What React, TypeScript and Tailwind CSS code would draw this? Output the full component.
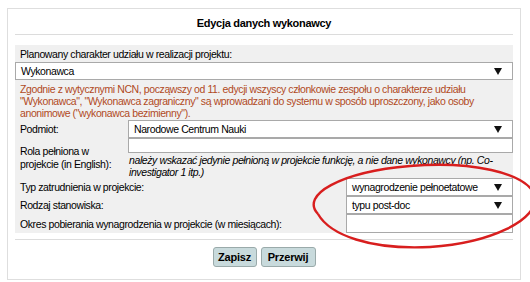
import React from "react";

const Arrow = () => (
  <svg width="8" height="7" viewBox="0 0 8 7" className="shrink-0">
    <path d="M0 0 H8 L4 7 Z" fill="#111" />
  </svg>
);

const Select = ({ value, className = "" }: { value: string; className?: string }) => (
  <div
    className={`flex h-[18px] items-center justify-between border border-[#a9a9a9] bg-white pl-[5px] pr-[10px] ${className}`}
  >
    <span className="whitespace-nowrap">{value}</span>
    <Arrow />
  </div>
);

const App = () => {
  return (
    <div className="relative h-[282px] w-[530px] overflow-hidden bg-white font-['Liberation_Sans',Arial,sans-serif] text-[10.5px] leading-[12px] tracking-[-0.4px] text-black">
      <div className="ml-[7px] mt-[8px] flex h-[272px] w-[514px] flex-col border border-[#dedede] px-[7px]">
        {/* header */}
        <div className="flex h-[26px] items-center justify-center border-b border-[#dcdcdc] pt-[2px] text-[11px] font-bold tracking-[-0.3px]">
          Edycja danych wykonawcy
        </div>

        {/* form panel */}
        <div className="mt-[10px] flex h-[188px] flex-col bg-[#f0f0f0]">
          <div className="flex h-[17px] items-center pl-[5px]">
            Planowany charakter udziału w realizacji projektu:
          </div>
          <Select value="Wykonawca" className="h-[18px] border-[#7f9dc9]" />
          <div className="mt-[3px] pl-[5px] text-[#b04a1e]">
            <div className="whitespace-nowrap">
              Zgodnie z wytycznymi NCN, począwszy od 11. edycji wszyscy członkowie zespołu o charakterze udziału
            </div>
            <div className="whitespace-nowrap">
              "Wykonawca", "Wykonawca zagraniczny" są wprowadzani do systemu w sposób uproszczony, jako osoby
            </div>
            <div className="whitespace-nowrap">anonimowe ("wykonawca bezimienny").</div>
          </div>

          <div className="mt-[1px] flex h-[18px] items-center">
            <div className="w-[113px] shrink-0 pl-[5px]">Podmiot:</div>
            <Select value="Narodowe Centrum Nauki" className="flex-1" />
          </div>

          <div className="flex h-[40px]">
            <div className="flex w-[113px] shrink-0 flex-col justify-end pb-[7px] pl-[5px] leading-[13px]">
              <div className="whitespace-nowrap">Rola pełniona w</div>
              <div className="whitespace-nowrap">projekcie (in English):</div>
            </div>
            <div className="flex min-w-0 flex-1 flex-col">
              <div className="h-[18px] border border-[#a9a9a9] bg-white" />
              <div className="pl-[1px] pt-[1px] italic">
                <div className="whitespace-nowrap">
                  należy wskazać jedynie pełnioną w projekcie funkcję, a nie dane wykonawcy (np. Co-
                </div>
                <div className="whitespace-nowrap">investigator 1 itp.)</div>
              </div>
            </div>
          </div>

          <div className="flex h-[18px] items-center">
            <div className="flex-1 pl-[5px]">Typ zatrudnienia w projekcie:</div>
            <Select value="wynagrodzenie pełnoetatowe" className="w-[167px] shrink-0" />
          </div>
          <div className="flex h-[18px] items-center">
            <div className="flex-1 pl-[5px]">Rodzaj stanowiska:</div>
            <Select value="typu post-doc" className="w-[167px] shrink-0" />
          </div>
          <div className="flex h-[19px] items-center">
            <div className="flex-1 whitespace-nowrap pl-[5px]">
              Okres pobierania wynagrodzenia w projekcie (w miesiącach):
            </div>
            <div className="h-[19px] w-[167px] shrink-0 border border-[#a9a9a9] bg-white" />
          </div>
        </div>

        {/* footer */}
        <div className="mt-[6px] flex justify-center gap-[4px] border-t border-[#dcdcdc] pt-[7px]">
          <button className="h-[20px] w-[44px] rounded-[3px] border border-[#9aaaaa] bg-[#c8dadc] text-[11px] font-bold tracking-[-0.2px]">
            Zapisz
          </button>
          <button className="h-[20px] w-[55px] rounded-[3px] border border-[#9aaaaa] bg-[#c8dadc] text-[11px] font-bold tracking-[-0.2px]">
            Przerwij
          </button>
        </div>
      </div>

      {/* red hand-drawn ellipse */}
      <svg className="pointer-events-none absolute left-0 top-0" width="530" height="282">
        <path
          d="M 318 214 C 300 195, 340 172, 410 166 C 470 161, 525 172, 535 195 C 540 220, 490 243, 430 247 C 370 250, 330 235, 318 214"
          fill="none"
          stroke="#d81e1e"
          strokeWidth="2.4"
        />
      </svg>
    </div>
  );
};

export default App;
